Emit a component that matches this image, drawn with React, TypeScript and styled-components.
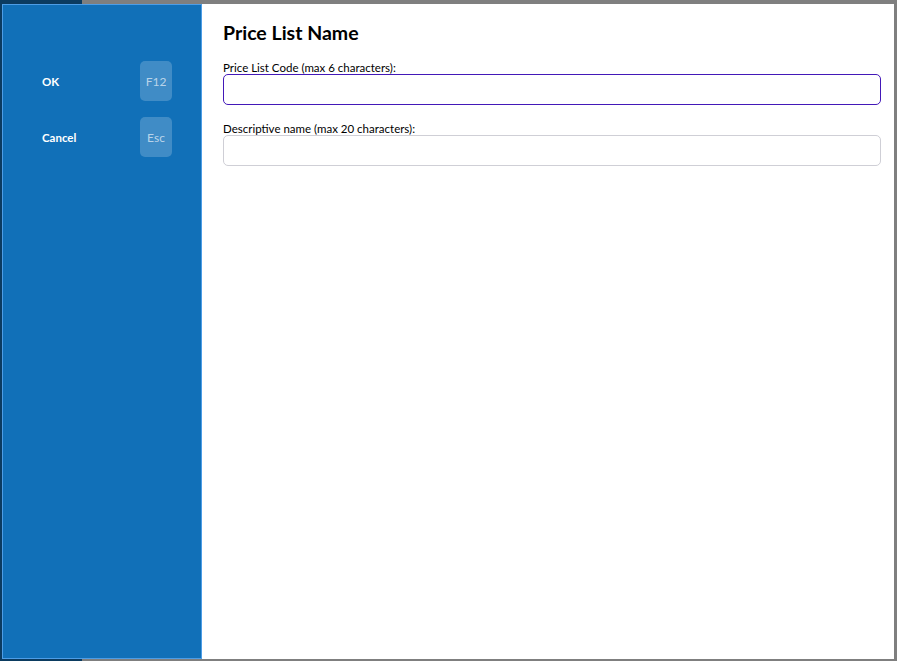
import React from 'react'
import styled, {createGlobalStyle} from 'styled-components'

const GlobalStyle = createGlobalStyle`
  html, body {
    margin: 0;
    padding: 0;
    height: 100%;
  }
  body {
    font-family: Lato, 'Open Sans', sans-serif;
    background: linear-gradient(to right, #0b3b60 0, #0b3b60 82px, #7f7f7f 82px);
  }
`

interface Action {
  label: string
  hotkey: string
}

const ACTIONS: Action[] = [
  {label: 'OK', hotkey: 'F12'},
  {label: 'Cancel', hotkey: 'Esc'},
]

export default function App() {
  return (
    <>
      <GlobalStyle />
      <Dialog>
        <Sidebar>
          <ActionList>
            {ACTIONS.map((action) => (
              <ActionRow key={action.label}>
                <ActionLabel>{action.label}</ActionLabel>
                <Hotkey>{action.hotkey}</Hotkey>
              </ActionRow>
            ))}
          </ActionList>
        </Sidebar>
        <Content>
          <Title>Price List Name</Title>
          <Field>
            <Label htmlFor="code">Price List Code (max 6 characters):</Label>
            <Input id="code" $focused maxLength={6} />
          </Field>
          <Field>
            <Label htmlFor="name">Descriptive name (max 20 characters):</Label>
            <Input id="name" maxLength={20} />
          </Field>
        </Content>
      </Dialog>
    </>
  )
}

// modal sits over the page behind it
const Dialog = styled.div`
  position: fixed;
  top: 4px;
  left: 2px;
  width: 892px;
  height: 655px;
  display: flex;
  background: #fff;
`

const Sidebar = styled.div`
  width: 200px;
  flex-shrink: 0;
  box-sizing: border-box;
  background: #1170b8;
  border: 1px solid #4d9de6;
  padding: 56px 29px 0 39px;
`

const ActionList = styled.div`
  display: flex;
  flex-direction: column;
  gap: 16px;
`

const ActionRow = styled.div`
  display: flex;
  align-items: center;
  justify-content: space-between;
`

const ActionLabel = styled.span`
  color: #fff;
  font-size: 11.5px;
  font-weight: bold;
`

const Hotkey = styled.span`
  width: 32px;
  height: 40px;
  border-radius: 5px;
  background: rgba(255, 255, 255, 0.2);
  color: rgba(255, 255, 255, 0.65);
  font-size: 12px;
  display: flex;
  align-items: center;
  justify-content: center;
`

const Content = styled.div`
  flex: 1;
  padding: 17px 13px 0 21px;
  display: flex;
  flex-direction: column;
  gap: 17px;
`

const Title = styled.h1`
  margin: 0 0 -1px;
  font-size: 19.5px;
  font-weight: bold;
  color: #000;
  line-height: 24px;
`

const Field = styled.div`
  display: flex;
  flex-direction: column;
`

const Label = styled.label`
  font-size: 11.5px;
  color: #000;
  line-height: 13px;
`

const Input = styled.input<{$focused?: boolean}>`
  box-sizing: border-box;
  height: 31px;
  width: 100%;
  border-radius: 5px;
  border: 1px solid ${(props) => (props.$focused ? '#4318b8' : '#cfcfd6')};
  outline: none;
  font-family: inherit;
  font-size: 13px;
  padding: 0 8px;
  background: #fff;
`
